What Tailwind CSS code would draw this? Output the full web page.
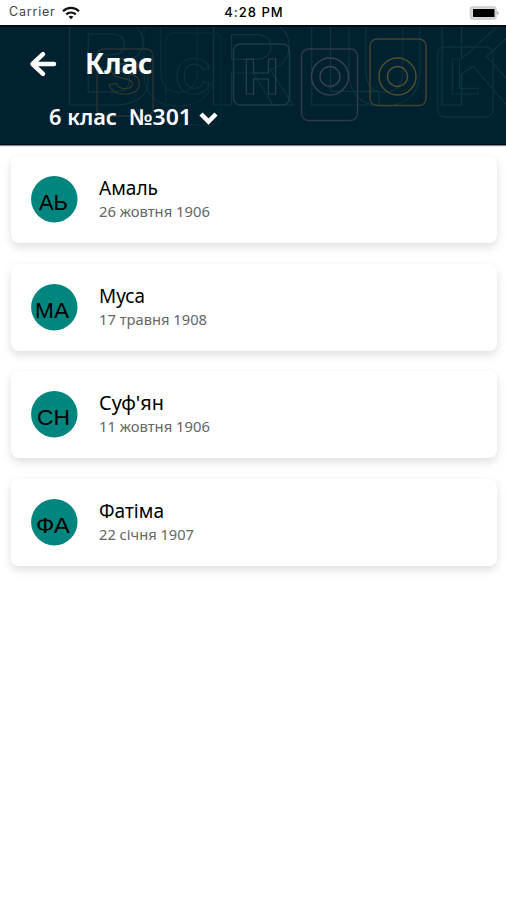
<!DOCTYPE html>
<html lang="uk">
<head>
  <meta charset="UTF-8" />
  <meta name="viewport" content="width=device-width, initial-scale=1.0"/>
  <title>Клас</title>
  <script src="https://cdn.jsdelivr.net/npm/@tailwindcss/browser@4"></script>
</head>
<body class="bg-white min-h-screen overflow-hidden font-['Noto_Sans',sans-serif] text-black">

  <!-- status bar -->
  <div class="h-[25px] pl-[9px] pr-[7px] grid grid-cols-3 items-center font-['Inter',sans-serif]">
    <div class="flex items-center gap-[6px]">
      <span class="text-[12.5px] tracking-[0.8px] leading-none text-[#444]">Carrier</span>
      <svg class="w-[18px] h-[14px]" viewBox="0 0 18 14" fill="none" stroke="#111" stroke-width="2.2">
        <path d="M1 5.2a11.5 11.5 0 0 1 16 0"/>
        <path d="M4.2 8.4a7 7 0 0 1 9.6 0"/>
        <path d="M9 13.2l-2.4-2.5a3.6 3.6 0 0 1 4.8 0z" fill="#111" stroke="none"/>
      </svg>
    </div>
    <span class="text-center text-[13px] font-medium tracking-[1px] leading-none whitespace-nowrap">4:28 PM</span>
    <svg class="w-[30px] h-[14px] justify-self-end" viewBox="0 0 30 14">
      <rect x="1.500" y="1" width="25.500" height="12" rx="2.5" fill="#ddd" stroke="#ccc" stroke-width="1.5"/>
      <rect x="4" y="3" width="21.5" height="8" fill="#000"/>
      <path d="M28 5l2 2-2 2z" fill="#aaa"/>
    </svg>
  </div>

  <header class="relative h-[120px] bg-[#00212f] border-t-2 border-b border-t-[#000c14] border-b-[#000c14] shadow-[0_1px_1px_#888] overflow-hidden">
    <!-- background pattern -->
    <svg class="absolute -top-[2px] left-0 w-[506px] h-[120px]" viewBox="0 25 506 120" fill="none">
      <g font-family="Liberation Sans" font-weight="bold" font-size="122" stroke="#0e3541" stroke-width="1.200">
        <text x="61" y="104.500" textLength="93" lengthAdjust="spacingAndGlyphs">B</text>
        <text x="137" y="104.500" textLength="84" lengthAdjust="spacingAndGlyphs" opacity=".7">U</text>
        <text x="205" y="104.500" textLength="91" lengthAdjust="spacingAndGlyphs">R</text>
        <text x="303" y="104.500" textLength="80" lengthAdjust="spacingAndGlyphs">L</text>
        <text x="342" y="104.500" textLength="85" lengthAdjust="spacingAndGlyphs">U</text>
        <text x="433" y="104.500" textLength="98" lengthAdjust="spacingAndGlyphs">K</text>
      </g>
      <g stroke-width="1.400">
        <rect x="97" y="49" width="56" height="67" rx="7" stroke="#2a3330"/>
        <rect x="166" y="33" width="55" height="92" rx="7" stroke="#042c36"/>
        <rect x="233.500" y="44" width="56" height="61" rx="7" stroke="#1b3f49"/>
        <rect x="301.500" y="49" width="56" height="71.500" rx="7" stroke="#32394a"/>
        <rect x="370" y="39" width="56" height="66.500" rx="7" stroke="#46432d"/>
        <rect x="437.500" y="47" width="55.500" height="70" rx="7" stroke="#06343d"/>
        <circle cx="330" cy="76.500" r="18.500" stroke="#3a4252"/>
        <circle cx="330" cy="76.500" r="10" stroke="#3a4252"/>
        <circle cx="397.500" cy="76.500" r="18.500" stroke="#55502d"/>
        <circle cx="397.500" cy="76.500" r="10" stroke="#55502d"/>
      </g>
      <g font-family="Liberation Sans" font-weight="bold" font-size="50" stroke-width="1.200">
        <text x="108" y="94" stroke="#383a28">S</text>
        <text x="175" y="94" stroke="#0a3540">C</text>
        <text x="243" y="94" stroke="#1f4650" textLength="36" lengthAdjust="spacingAndGlyphs">H</text>
        <text x="449" y="94" stroke="#073640">L</text>
      </g>
    </svg>

    <div class="relative flex items-center gap-[28px] pl-[29px] pt-[19px]">
      <svg class="w-[28px] h-[28px]" viewBox="0 0 28 28" fill="none" stroke="#fff" stroke-width="4.500" stroke-linecap="round" stroke-linejoin="round">
        <path d="M25 14H4M14 4.200L3.500 14L14 23.800"/>
      </svg>
      <h1 class="text-white text-[28px] leading-[36px] font-bold -mt-px"><span class="inline-block w-[69px] origin-left scale-x-[0.99]">Клас</span></h1>
    </div>
    <button class="relative flex items-center pl-[49px] mt-[24px] text-white text-[21px] leading-[24px] font-semibold whitespace-pre">
      <svg class="w-[144px] h-[26px] overflow-visible" viewBox="0 0 144 26" fill="#fff">
        <text x="0" y="20" textLength="68" lengthAdjust="spacingAndGlyphs">6 клас</text>
        <text x="80" y="20" font-size="22" textLength="63" lengthAdjust="spacingAndGlyphs">№301</text>
      </svg>
      <svg class="ml-[6px] w-[19px] h-[14px]" viewBox="0 0 19 14" fill="none" stroke="#fff" stroke-width="4.500">
        <path d="M2 3l7.500 7.500L17 3"/>
      </svg>
    </button>
  </header>

  <!-- students -->
  <main class="flex flex-col gap-[20.7px] pt-[11px] pl-[11px] pr-[9px]">
    <div class="h-[87px] rounded-lg bg-white shadow-[0_4px_10px_rgba(0,0,0,0.13)] flex items-center pl-[20px]">
      <svg class="w-[47px] h-[47px] shrink-0" viewBox="0 0 47 47">
        <circle cx="23.300" cy="23.200" r="23.200" fill="#00857f"/>
        <text x="8" y="34" font-family="Liberation Sans" font-size="22" textLength="29" lengthAdjust="spacingAndGlyphs">АЬ</text>
      </svg>
      <svg class="ml-[21px] w-[120px] h-[47px]" viewBox="0 0 120 47">
        <text x="0" y="19" font-size="19" textLength="59" lengthAdjust="spacingAndGlyphs">Амаль</text>
        <text x="0" y="40.500" font-size="13.500" fill="#666" textLength="111" lengthAdjust="spacingAndGlyphs">26 жовтня 1906</text>
      </svg>
    </div>
    <div class="h-[87px] rounded-lg bg-white shadow-[0_4px_10px_rgba(0,0,0,0.13)] flex items-center pl-[20px]">
      <svg class="w-[47px] h-[47px] shrink-0" viewBox="0 0 47 47">
        <circle cx="23.300" cy="23.200" r="23.200" fill="#00857f"/>
        <text x="4" y="34" font-family="Liberation Sans" font-size="22" textLength="34" lengthAdjust="spacingAndGlyphs">МА</text>
      </svg>
      <svg class="ml-[21px] w-[120px] h-[47px]" viewBox="0 0 120 47">
        <text x="0" y="19" font-size="19" textLength="46" lengthAdjust="spacingAndGlyphs">Муса</text>
        <text x="0" y="40.500" font-size="13.500" fill="#666" textLength="108" lengthAdjust="spacingAndGlyphs">17 травня 1908</text>
      </svg>
    </div>
    <div class="h-[87px] rounded-lg bg-white shadow-[0_4px_10px_rgba(0,0,0,0.13)] flex items-center pl-[20px]">
      <svg class="w-[47px] h-[47px] shrink-0" viewBox="0 0 47 47">
        <circle cx="23.300" cy="23.200" r="23.200" fill="#00857f"/>
        <text x="6" y="34" font-family="Liberation Sans" font-size="22" textLength="33" lengthAdjust="spacingAndGlyphs">СН</text>
      </svg>
      <svg class="ml-[21px] w-[120px] h-[47px]" viewBox="0 0 120 47">
        <text x="0" y="19" font-size="19" textLength="65" lengthAdjust="spacingAndGlyphs">Суф'ян</text>
        <text x="0" y="40.500" font-size="13.500" fill="#666" textLength="111" lengthAdjust="spacingAndGlyphs">11 жовтня 1906</text>
      </svg>
    </div>
    <div class="h-[87px] rounded-lg bg-white shadow-[0_4px_10px_rgba(0,0,0,0.13)] flex items-center pl-[20px]">
      <svg class="w-[47px] h-[47px] shrink-0" viewBox="0 0 47 47">
        <circle cx="23.300" cy="23.200" r="23.200" fill="#00857f"/>
        <text x="5" y="34" font-family="Liberation Sans" font-size="22" textLength="34" lengthAdjust="spacingAndGlyphs">ФА</text>
      </svg>
      <svg class="ml-[21px] w-[120px] h-[47px]" viewBox="0 0 120 47">
        <text x="0" y="19" font-size="19" textLength="65" lengthAdjust="spacingAndGlyphs">Фатіма</text>
        <text x="0" y="40.500" font-size="13.500" fill="#666" textLength="95" lengthAdjust="spacingAndGlyphs">22 січня 1907</text>
      </svg>
    </div>
  </main>

</body>
</html>
